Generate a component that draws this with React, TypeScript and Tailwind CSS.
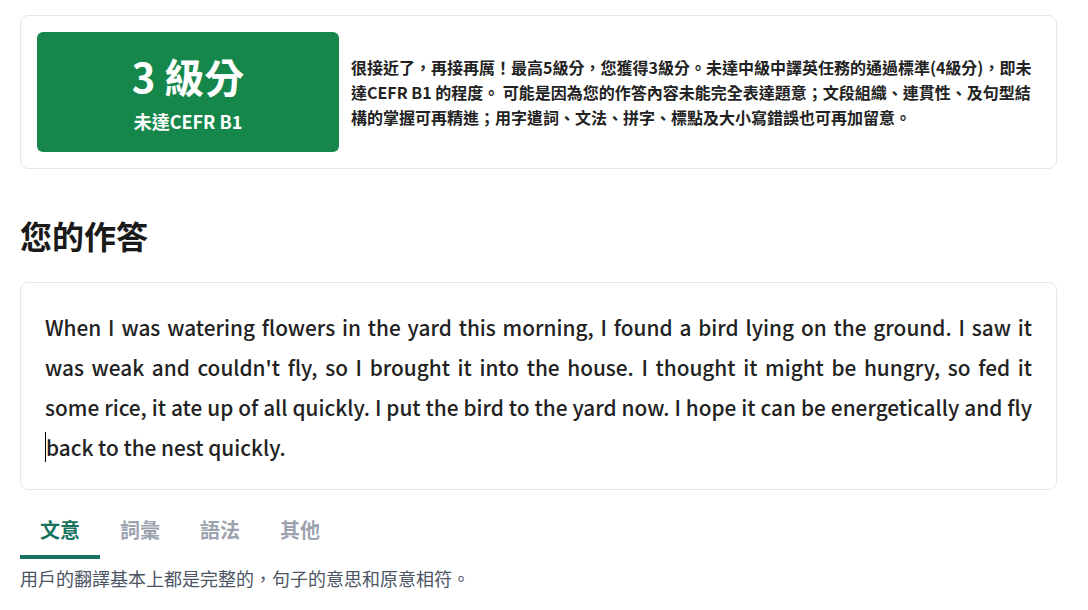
import React from "react";

const tabs = ["文意", "詞彙", "語法", "其他"];

const answerLines = [
  "When I was watering flowers in the yard this morning, I found a bird lying on the ground. I saw it",
  "was weak and couldn't fly, so I brought it into the house. I thought it might be hungry, so fed it",
  "some rice, it ate up of all quickly. I put the bird to the yard now. I hope it can be energetically and fly",
];

const App = () => {
  return (
    <div className="min-h-screen bg-white pl-5 pr-[31px] pt-[15px] text-[#222] font-['Noto_Sans_CJK_TC',sans-serif]">
      {/* Score summary */}
      <section className="flex items-center gap-3 rounded-lg border border-gray-200 p-4">
        <div className="flex h-[120px] w-[302px] shrink-0 flex-col items-center justify-center rounded-md bg-[#16874a] text-white">
          <div className="text-[40px] font-bold leading-[48px]">3 級分</div>
          <div className="mt-[9px] text-[18px] font-bold leading-6">未達CEFR B1</div>
        </div>
        <p className="text-[16px] font-bold leading-[25px] text-[#222]">
          很接近了，再接再厲！最高5級分，您獲得3級分。未達中級中譯英任務的通過標準(4級分)，即未達CEFR B1 的程度。 可能是因為您的作答內容未能完全表達題意；文段組織、連貫性、及句型結構的掌握可再精進；用字遣詞、文法、拼字、標點及大小寫錯誤也可再加留意。
        </p>
      </section>

      <h2 className="mt-[46px] text-[32px] font-bold leading-10 text-[#1a1a1a]">您的作答</h2>

      {/* Answer */}
      <section className="mt-[27px] rounded-lg border border-gray-200 px-6 pt-[24px] pb-[22px]">
        <div className="text-[20.8px] font-medium leading-10 text-[#222]">
          {answerLines.map((l) => (
            <div key={l} className="whitespace-nowrap text-justify [text-align-last:justify]">
              {l}
            </div>
          ))}
          <div>
            <span className="border-l border-black">back</span> to the nest quickly.
          </div>
        </div>
      </section>

      {/* Tabs */}
      <nav className="mt-[16px] flex">
        {tabs.map((t, i) => (
          <div
            key={t}
            className={
              i === 0
                ? "w-20 border-b-4 border-[#17735f] pt-[10px] pb-[11px] text-center text-[20px] font-bold leading-7 text-[#17735f]"
                : "w-20 border-b-4 border-transparent pt-[10px] pb-[11px] text-center text-[20px] font-bold leading-7 text-[#9ca3af]"
            }
          >
            {t}
          </div>
        ))}
      </nav>
      <p className="mt-[7px] text-[18px] leading-6 text-[#4b5563]">用戶的翻譯基本上都是完整的，句子的意思和原意相符。</p>
    </div>
  );
};

export default App;
